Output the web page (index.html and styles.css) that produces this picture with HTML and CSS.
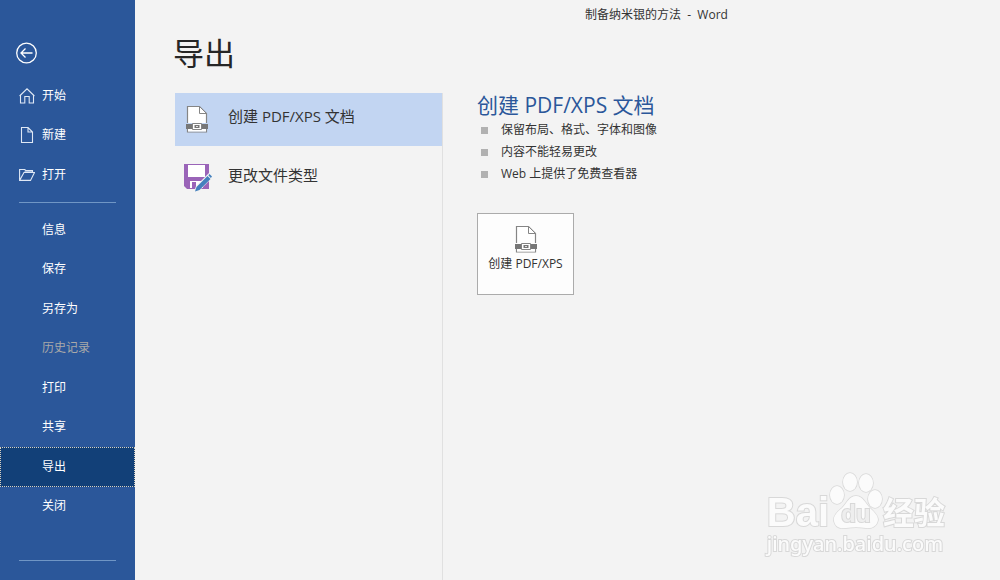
FILE: index.html
```html
<!DOCTYPE html>
<html lang="zh-CN">
<head>
  <meta charset="UTF-8">
  <title>制备纳米银的方法 - Word</title>
  <link rel="stylesheet" href="styles.css">
</head>
<body>

<svg width="0" height="0" class="defs">
  <symbol id="icon-pdf" viewBox="0 0 24 28">
    <path d="M2.5 18V1.5h12l7 7V18z" fill="#fff"/>
    <path d="M2.5 18V1.5h12l7 7V18M2.5 24v3h19v-3" fill="none" stroke="#858585" stroke-width="1.2"/>
    <path d="M14.5 1.5v7h7z" fill="#fff" stroke="#858585"/>
    <path d="M3 23h18v3.500H3z" fill="#fff"/>
    <path d="M1 19h6v5H1zM17 19h6v5h-6z" fill="#777"/>
    <path d="M7.5 18.5h9v6h-9z" fill="#fff" stroke="#858585"/>
    <path d="M9.500 20h5v3h-5z" fill="#777"/>
    <path d="M11 21h2v1h-2z" fill="#ddd"/>
  </symbol>
</svg>

<div class="backstage">
  <nav class="sidebar">
    <button class="back" aria-label="返回">
      <svg width="22" height="22" viewBox="0 0 22 22" fill="none" stroke="#fff" stroke-width="1.3">
        <circle cx="10.500" cy="11" r="9.800"/>
        <path d="M16.500 11H5M9.500 6.500L5 11l4.500 4.500"/>
      </svg>
    </button>

    <div class="menu menu-top">
      <button class="item">
        <svg width="16" height="16" viewBox="0 0 16 16" fill="none" stroke="#dfe8f5" stroke-width="1.1">
          <path d="M.6 8L8 .8 15.400 8M1.500 7.500v7.500h4.300V8.500h4.400V15h4.300V7.500"/>
        </svg>
        开始
      </button>
      <button class="item">
        <svg width="16" height="16" viewBox="0 0 16 16" fill="none" stroke="#dfe8f5" stroke-width="1.1">
          <path d="M2.5.5H9l4.500 4.500v10.500h-11zM9 .5V5h4.500"/>
        </svg>
        新建
      </button>
      <button class="item">
        <svg width="16" height="16" viewBox="0 0 16 16" fill="none" stroke="#dfe8f5" stroke-width="1.1">
          <path d="M6 3h7v3H5z" fill="#9fb6da" stroke="none"/>
          <path d="M.6 13V2.500h5L7 3.500h6.500V6M.6 13.400h10.900L15.500 5.500H5L.6 13.400z"/>
        </svg>
        打开
      </button>
    </div>

    <hr class="divider">

    <div class="menu menu-main">
      <button class="item">信息</button>
      <button class="item">保存</button>
      <button class="item">另存为</button>
      <button class="item" disabled>历史记录</button>
      <button class="item">打印</button>
      <button class="item">共享</button>
      <button class="item active">导出</button>
      <button class="item">关闭</button>
    </div>

    <hr class="divider divider-bottom">
  </nav>

  <main class="main">
    <div class="window-title">制备纳米银的方法&nbsp; -&nbsp; Word</div>
    <h1>导出</h1>

    <div class="content">
      <div class="options">
        <button class="option selected">
          <svg width="28" height="28"><use href="#icon-pdf"/></svg>
          <span>创建 PDF/XPS 文档</span>
        </button>
        <button class="option">
          <svg width="28" height="28" viewBox="0 0 28 28">
            <path d="M0 0h25v25H3l-3-3z" fill="#9a64b8"/>
            <path d="M4 1h17v12H4z" fill="#fff"/>
            <path d="M6 17h13v7H6z" fill="#fff"/>
            <path d="M8 18h4v6H8z" fill="#9a64b8"/>
            <path d="M10 28l2-6L25 9l4 4-13 13z" fill="#f3f3f3"/>
            <path d="M11 27.500l1.500-4.500L23.500 12l3 3L15.500 26z" fill="#4480bd"/>
            <path d="M24.300 11.200l1.200-1.200 2.500 2.500-1.200 1.500z" fill="#4480bd"/>
          </svg>
          <span>更改文件类型</span>
        </button>
      </div>

      <section class="detail">
        <h2>创建 PDF/XPS 文档</h2>
        <ul>
          <li>保留布局、格式、字体和图像</li>
          <li>内容不能轻易更改</li>
          <li>Web 上提供了免费查看器</li>
        </ul>
        <button class="create">
          <svg width="28" height="28"><use href="#icon-pdf"/></svg>
          创建 PDF/XPS
        </button>
      </section>
    </div>
  </main>
</div>

<!-- watermark -->
<div class="watermark">
  <div class="brand">
    <span class="brand-latin">Bai</span>
    <span class="paw">
      <svg width="54" height="58" viewBox="0 0 54 58" fill="#fbfbfb" stroke="#d8d8d8" stroke-width="1.5">
        <ellipse cx="8" cy="23" rx="7" ry="9"/>
        <ellipse cx="21" cy="10" rx="7" ry="9"/>
        <ellipse cx="37" cy="11" rx="7" ry="9"/>
        <ellipse cx="46" cy="27" rx="7" ry="9"/>
        <path d="M27 24c-7 0-9 7-14 12-5 4-9 8-8 13 1 6 6 8 12 7 7-1 13-1 20 0 6 1 11-2 12-8 0-5-4-8-8-12-5-5-7-12-14-12z"/>
      </svg>
      <span class="du">du</span>
    </span>
    <span class="brand-cn">经验</span>
  </div>
  <div class="site">jingyan.baidu.com</div>
</div>

</body>
</html>
```
FILE: styles.css
```css
* { box-sizing: border-box; margin: 0; padding: 0; }

body {
  background: #f3f3f3;
  color: #333;
  font-family: "Open Sans", "Noto Sans CJK SC", sans-serif;
  font-size: 12px;
  line-height: 18px;
}

button {
  background: none;
  border: none;
  color: inherit;
  font: inherit;
  cursor: pointer;
}

.defs { display: block; }

.backstage {
  display: flex;
  min-height: 100vh;
}

/* sidebar */
.sidebar {
  display: flex;
  flex-direction: column;
  flex-shrink: 0;
  width: 135px;
  padding: 42px 0 19px;
  background: #2b579a;
  color: #fff;
}
.back {
  width: 22px;
  height: 22px;
  margin-left: 16px;
}
.back svg { display: block; }
.menu {
  display: grid;
  grid-auto-rows: 1fr;
}
.menu-top {
  height: 119px;
  margin: 12px 0 7px;
}
.menu-main {
  height: 316px;
  margin-top: 7px;
}
.item {
  display: flex;
  align-items: center;
  gap: 7px;
  padding-left: 19px;
  text-align: left;
}
.menu-main .item { padding-left: 42px; }
.item:disabled { color: #a9a9a9; }
.item.active {
  background: #124078;
  outline: 1px dotted #d8d0c0;
  outline-offset: -1px;
}
.divider {
  height: 1px;
  margin: 0 19px;
  border: none;
  background: #7096c5;
}
.divider-bottom { margin-top: auto; }

/* main area */
.main {
  display: flex;
  flex-direction: column;
  flex: 1;
  padding-left: 40px;
}
.window-title {
  padding: 6px 0 0 410px;
}
h1 {
  margin: 7px 0 18px -2px;
  font-size: 31px;
  font-weight: normal;
  line-height: 44px;
  color: #262626;
}
.content {
  display: flex;
  flex: 1;
}
.options {
  display: flex;
  flex-direction: column;
  gap: 5px;
  width: 268px;
  border-right: 1px solid #e0e0e0;
}
.option {
  display: flex;
  align-items: center;
  gap: 16px;
  height: 53px;
  padding-left: 9px;
  font-size: 15px;
  text-align: left;
}
.option svg { overflow: visible; }
.option span { padding-bottom: 6px; }
.option.selected {
  padding: 0 0 2px 8px;
  gap: 17px;
  background: #c2d5f2;
}

.detail { padding-left: 34px; }
h2 {
  font-size: 21px;
  font-weight: normal;
  line-height: 24px;
  color: #2b579a;
}
ul {
  list-style: none;
  padding: 2px 0 0 4px;
}
li {
  display: flex;
  align-items: center;
  gap: 13px;
  height: 22px;
}
li::before {
  content: "";
  width: 7px;
  height: 7px;
  background: #b1b1b1;
}
.create {
  display: flex;
  flex-direction: column;
  align-items: center;
  gap: 2px;
  height: 82px;
  min-width: 97px;
  margin-top: 28px;
  padding: 11px 10px;
  border: 1px solid #ababab;
  background: #fdfdfd;
}

/* watermark */
.watermark {
  position: fixed;
  right: 55px;
  bottom: 22px;
  color: #fbfbfb;
  -webkit-text-stroke: 2px #d8d8d8;
  paint-order: stroke fill;
}
.brand {
  display: flex;
  align-items: flex-end;
}
.brand-latin {
  font-family: "Liberation Sans", sans-serif;
  font-size: 40px;
  font-weight: bold;
  line-height: 36px;
}
.paw {
  position: relative;
  height: 58px;
}
.du {
  position: absolute;
  left: 0;
  right: 0;
  bottom: 4px;
  font-family: "Liberation Sans", sans-serif;
  font-size: 24px;
  font-weight: bold;
  line-height: 24px;
  text-align: center;
  color: #eee;
}
.brand-cn {
  font-size: 31px;
  font-weight: bold;
  line-height: 36px;
}
.site {
  font-family: "Noto Sans", sans-serif;
  font-size: 20px;
  font-weight: 500;
  line-height: 28px;
}
```
